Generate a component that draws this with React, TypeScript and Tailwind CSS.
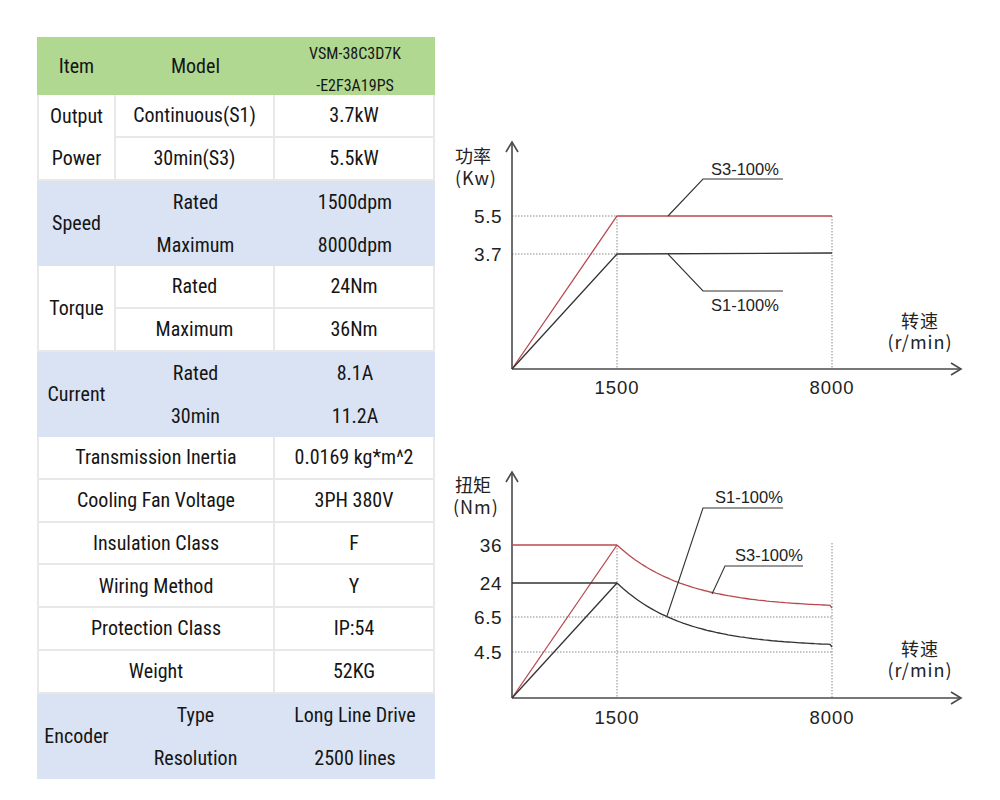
import React from "react";

const cellFont = "font-['Roboto','Liberation_Sans',sans-serif] [font-stretch:75%] text-[20px] text-[#151515]";

function curve(x0: number, y0: number, x1: number, y1: number, k: number) {
  const pts: string[] = [];
  const amp = y1 - y0;
  for (let x = x0; x <= x1; x += 3) {
    const y = y1 - amp * Math.exp(-(x - x0) / k);
    pts.push(`${x.toFixed(1)},${y.toFixed(1)}`);
  }
  pts.push(`${x1},${y1}`);
  return "M" + pts.join(" L");
}

const AX = "#4a4a4a";
const RED = "#b8484e";
const DOT = "#8a8a8a";
const LATIN = "'Liberation Sans', Arial, sans-serif";
const CJK = "'Noto Sans CJK SC', 'Liberation Sans', sans-serif";

function SpeedLabel({ y }: { y: number }) {
  return (
    <g fill="#222">
      <text x={470} y={y} textAnchor="middle" fontFamily={CJK} fontSize={18} letterSpacing={1}>
        转速
      </text>
      <text x={470} y={y + 21} textAnchor="middle" fontFamily={CJK} fontSize={18} letterSpacing={1}>
        (r/min)
      </text>
    </g>
  );
}

function PowerChart() {
  return (
    <svg width={520} height={280} viewBox="0 0 520 280" className="block">
      <g stroke={DOT} strokeWidth={1} strokeDasharray="1.5 1.5" fill="none">
        <line x1={62} y1={86} x2={167} y2={86} />
        <line x1={62} y1={124} x2={167} y2={124} />
        <line x1={167} y1={86} x2={167} y2={239} />
        <line x1={382} y1={86} x2={382} y2={239} />
      </g>
      <g stroke={AX} strokeWidth={1.6} fill="none">
        <line x1={62} y1={13} x2={62} y2={239} />
        <polyline points="56,22 62,12 68,22" />
        <line x1={62} y1={239} x2={510} y2={239} />
        <polyline points="501,233 511,239 501,245" />
      </g>
      <g fill="none" strokeWidth={1.3}>
        <polyline points="62,239 167,86 382,86" stroke={RED} />
        <polyline points="62,239 167,124 382,123" stroke="#333" />
        <polyline points="218,86 253,49 333,49" stroke="#333" strokeWidth={1.1} />
        <polyline points="218,124 253,161 333,161" stroke="#333" strokeWidth={1.1} />
      </g>
      <g fill="#222" fontFamily={LATIN}>
        <text x={261} y={45} fontSize={16.5}>S3-100%</text>
        <text x={261} y={181} fontSize={16.5}>S1-100%</text>
        <text x={52} y={93} fontSize={19} textAnchor="end" letterSpacing={0.5}>5.5</text>
        <text x={52} y={131} fontSize={19} textAnchor="end" letterSpacing={0.5}>3.7</text>
        <text x={167} y={264} fontSize={18.5} textAnchor="middle" letterSpacing={1}>1500</text>
        <text x={382} y={264} fontSize={18.5} textAnchor="middle" letterSpacing={1}>8000</text>
      </g>
      <g fill="#222" fontFamily={CJK} fontSize={18}>
        <text x={5} y={33}>功率</text>
        <text x={5} y={55} letterSpacing={1}>(Kw)</text>
      </g>
      <SpeedLabel y={198} />
    </svg>
  );
}

function TorqueChart() {
  return (
    <svg width={520} height={280} viewBox="0 0 520 280" className="block">
      <g stroke={DOT} strokeWidth={1} strokeDasharray="1.5 1.5" fill="none">
        <line x1={62} y1={157} x2={382} y2={157} />
        <line x1={62} y1={192} x2={382} y2={192} />
        <line x1={167} y1={85} x2={167} y2={238} />
        <line x1={382} y1={83} x2={382} y2={238} />
      </g>
      <g stroke={AX} strokeWidth={1.6} fill="none">
        <line x1={62} y1={13} x2={62} y2={238} />
        <polyline points="56,22 62,12 68,22" />
        <line x1={62} y1={238} x2={510} y2={238} />
        <polyline points="501,232 511,238 501,244" />
      </g>
      <g fill="none" strokeWidth={1.3}>
        <polyline points="62,85 167,85" stroke={RED} />
        <polyline points="62,238 167,85" stroke={RED} />
        <path d={curve(167, 85, 382, 148, 68)} stroke={RED} />
        <polyline points="62,123 167,123" stroke="#333" />
        <polyline points="62,238 167,123" stroke="#333" />
        <path d={curve(167, 123, 382, 187, 67)} stroke="#333" />
        <polyline points="217,156 253,48 333,48" stroke="#333" strokeWidth={1.1} />
        <polyline points="262,134 275,106 353,106" stroke="#333" strokeWidth={1.1} />
      </g>
      <g fill="#222" fontFamily={LATIN}>
        <text x={265} y={43} fontSize={16.5}>S1-100%</text>
        <text x={285} y={101} fontSize={16.5}>S3-100%</text>
        <text x={52} y={92} fontSize={19} textAnchor="end" letterSpacing={0.5}>36</text>
        <text x={52} y={130} fontSize={19} textAnchor="end" letterSpacing={0.5}>24</text>
        <text x={52} y={164} fontSize={19} textAnchor="end" letterSpacing={0.5}>6.5</text>
        <text x={52} y={199} fontSize={19} textAnchor="end" letterSpacing={0.5}>4.5</text>
        <text x={167} y={264} fontSize={18.5} textAnchor="middle" letterSpacing={1}>1500</text>
        <text x={382} y={264} fontSize={18.5} textAnchor="middle" letterSpacing={1}>8000</text>
      </g>
      <g fill="#222" fontFamily={CJK} fontSize={18}>
        <text x={5} y={32}>扭矩</text>
        <text x={3} y={54} letterSpacing={1}>(Nm)</text>
      </g>
      <SpeedLabel y={196} />
    </svg>
  );
}

const W = "bg-white border-r-2 border-b-2 border-[#e8e8e8] flex items-center justify-center";
const B = "bg-[#dae3f3] flex items-center justify-center";

function Table() {
  return (
    <div
      className={`grid grid-cols-[79px_159px_160px] grid-rows-[58px_repeat(16,42.75px)] w-[398px] ${cellFont}`}
    >
      <div className="col-start-1 row-start-1 bg-[#b0d890] flex items-center justify-center">Item</div>
      <div className="col-start-2 row-start-1 bg-[#b0d890] flex items-center justify-center">Model</div>
      <div className="col-start-3 row-start-1 bg-[#b0d890] flex flex-col items-center justify-between text-[16px] leading-none pt-[9px] pb-[1px]">
        <span>VSM-38C3D7K</span>
        <span>-E2F3A19PS</span>
      </div>

      <div className={`col-start-1 row-start-2 row-span-2 ${W} border-l-2 flex-col`}>
        <div className="h-[42.75px] flex items-center">Output</div>
        <div className="h-[42.75px] flex items-center">Power</div>
      </div>
      <div className={`col-start-2 row-start-2 ${W}`}>Continuous(S1)</div>
      <div className={`col-start-3 row-start-2 ${W}`}>3.7kW</div>
      <div className={`col-start-2 row-start-3 ${W}`}>30min(S3)</div>
      <div className={`col-start-3 row-start-3 ${W}`}>5.5kW</div>

      <div className={`col-start-1 row-start-4 row-span-2 ${B}`}>Speed</div>
      <div className={`col-start-2 row-start-4 ${B}`}>Rated</div>
      <div className={`col-start-3 row-start-4 ${B}`}>1500dpm</div>
      <div className={`col-start-2 row-start-5 ${B}`}>Maximum</div>
      <div className={`col-start-3 row-start-5 ${B}`}>8000dpm</div>

      <div className={`col-start-1 row-start-6 row-span-2 ${W} border-l-2`}>Torque</div>
      <div className={`col-start-2 row-start-6 ${W}`}>Rated</div>
      <div className={`col-start-3 row-start-6 ${W}`}>24Nm</div>
      <div className={`col-start-2 row-start-7 ${W}`}>Maximum</div>
      <div className={`col-start-3 row-start-7 ${W}`}>36Nm</div>

      <div className={`col-start-1 row-start-8 row-span-2 ${B}`}>Current</div>
      <div className={`col-start-2 row-start-8 ${B}`}>Rated</div>
      <div className={`col-start-3 row-start-8 ${B}`}>8.1A</div>
      <div className={`col-start-2 row-start-9 ${B}`}>30min</div>
      <div className={`col-start-3 row-start-9 ${B}`}>11.2A</div>

      <div className={`col-start-1 col-span-2 row-start-10 ${W} border-l-2`}>Transmission Inertia</div>
      <div className={`col-start-3 row-start-10 ${W}`}>0.0169 kg*m^2</div>
      <div className={`col-start-1 col-span-2 row-start-11 ${W} border-l-2`}>Cooling Fan Voltage</div>
      <div className={`col-start-3 row-start-11 ${W}`}>3PH 380V</div>
      <div className={`col-start-1 col-span-2 row-start-12 ${W} border-l-2`}>Insulation Class</div>
      <div className={`col-start-3 row-start-12 ${W}`}>F</div>
      <div className={`col-start-1 col-span-2 row-start-13 ${W} border-l-2`}>Wiring Method</div>
      <div className={`col-start-3 row-start-13 ${W}`}>Y</div>
      <div className={`col-start-1 col-span-2 row-start-14 ${W} border-l-2`}>Protection Class</div>
      <div className={`col-start-3 row-start-14 ${W}`}>IP:54</div>
      <div className={`col-start-1 col-span-2 row-start-15 ${W} border-l-2`}>Weight</div>
      <div className={`col-start-3 row-start-15 ${W}`}>52KG</div>

      <div className={`col-start-1 row-start-16 row-span-2 ${B}`}>Encoder</div>
      <div className={`col-start-2 row-start-16 ${B}`}>Type</div>
      <div className={`col-start-3 row-start-16 ${B}`}>Long Line Drive</div>
      <div className={`col-start-2 row-start-17 ${B}`}>Resolution</div>
      <div className={`col-start-3 row-start-17 ${B}`}>2500 lines</div>
    </div>
  );
}

export default function App() {
  return (
    <div className="w-[1000px] h-[800px] bg-white flex items-start overflow-hidden">
      <div className="pl-[37px] pt-[37px]">
        <Table />
      </div>
      <div className="ml-[15px] pt-[130px] flex flex-col gap-[50px]">
        <PowerChart />
        <TorqueChart />
      </div>
    </div>
  );
}
